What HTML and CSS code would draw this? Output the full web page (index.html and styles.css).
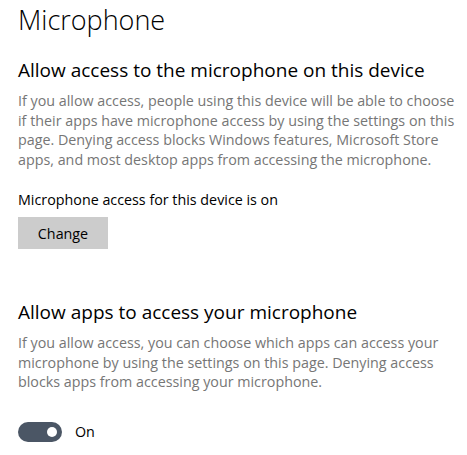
FILE: index.html
```html
<!DOCTYPE html>
<html>
<head>
<meta charset="utf-8">
<link rel="stylesheet" href="styles.css">
</head>
<body>
<main class="page">
  <h1 class="title">Microphone</h1>
  <section class="group">
    <h2 class="heading">Allow access to the microphone on this device</h2>
    <p class="desc">If you allow access, people using this device will be able to choose if their apps have microphone access by using the settings on this page. Denying access blocks Windows features, Microsoft Store apps, and most desktop apps from accessing the microphone.</p>
    <p class="status">Microphone access for this device is on</p>
    <button class="btn">Change</button>
  </section>
  <section class="group second">
    <h2 class="heading">Allow apps to access your microphone</h2>
    <p class="desc">If you allow access, you can choose which apps can access your microphone by using the settings on this page. Denying access blocks apps from accessing your microphone.</p>
    <div class="toggle-row">
      <span class="toggle"><span class="knob"></span></span>
      <span class="toggle-label">On</span>
    </div>
  </section>
</main>
</body>
</html>
```
FILE: styles.css
```css
html, body {
  margin: 0;
  padding: 0;
  background: #ffffff;
}
body {
  font-family: "Open Sans", "Noto Sans", sans-serif;
  color: #000;
}
.page {
  padding: 0 0 0 18px;
  width: 446px;
}
.title {
  margin: 0;
  font-size: 27px;
  font-weight: 300;
  line-height: 40px;
  height: 56px;
}
.heading {
  margin: 0;
  font-size: 19px;
  font-weight: 400;
  line-height: 28px;
}
.desc {
  margin: 7px 0 0;
  font-size: 14.3px;
  line-height: 19.5px;
  color: #767676;
}
.status {
  margin: 21px 0 0;
  font-size: 14.3px;
  line-height: 20px;
}
.btn {
  margin-top: 7px;
  width: 90px;
  height: 32px;
  border: 0;
  background: #cccccc;
  font: inherit;
  font-size: 14.3px;
  color: #000;
  padding: 0;
  display: block;
}
.second {
  margin-top: 49px;
}
.toggle-row {
  margin-top: 30px;
  display: flex;
  align-items: center;
  gap: 13px;
}
.toggle {
  width: 44px;
  height: 20px;
  border-radius: 10px;
  background: #4b5665;
  display: flex;
  align-items: center;
  justify-content: flex-end;
  padding: 0 5px;
  box-sizing: border-box;
}
.knob {
  width: 10px;
  height: 10px;
  border-radius: 50%;
  background: #fff;
}
.toggle-label {
  font-size: 14.3px;
}
```
